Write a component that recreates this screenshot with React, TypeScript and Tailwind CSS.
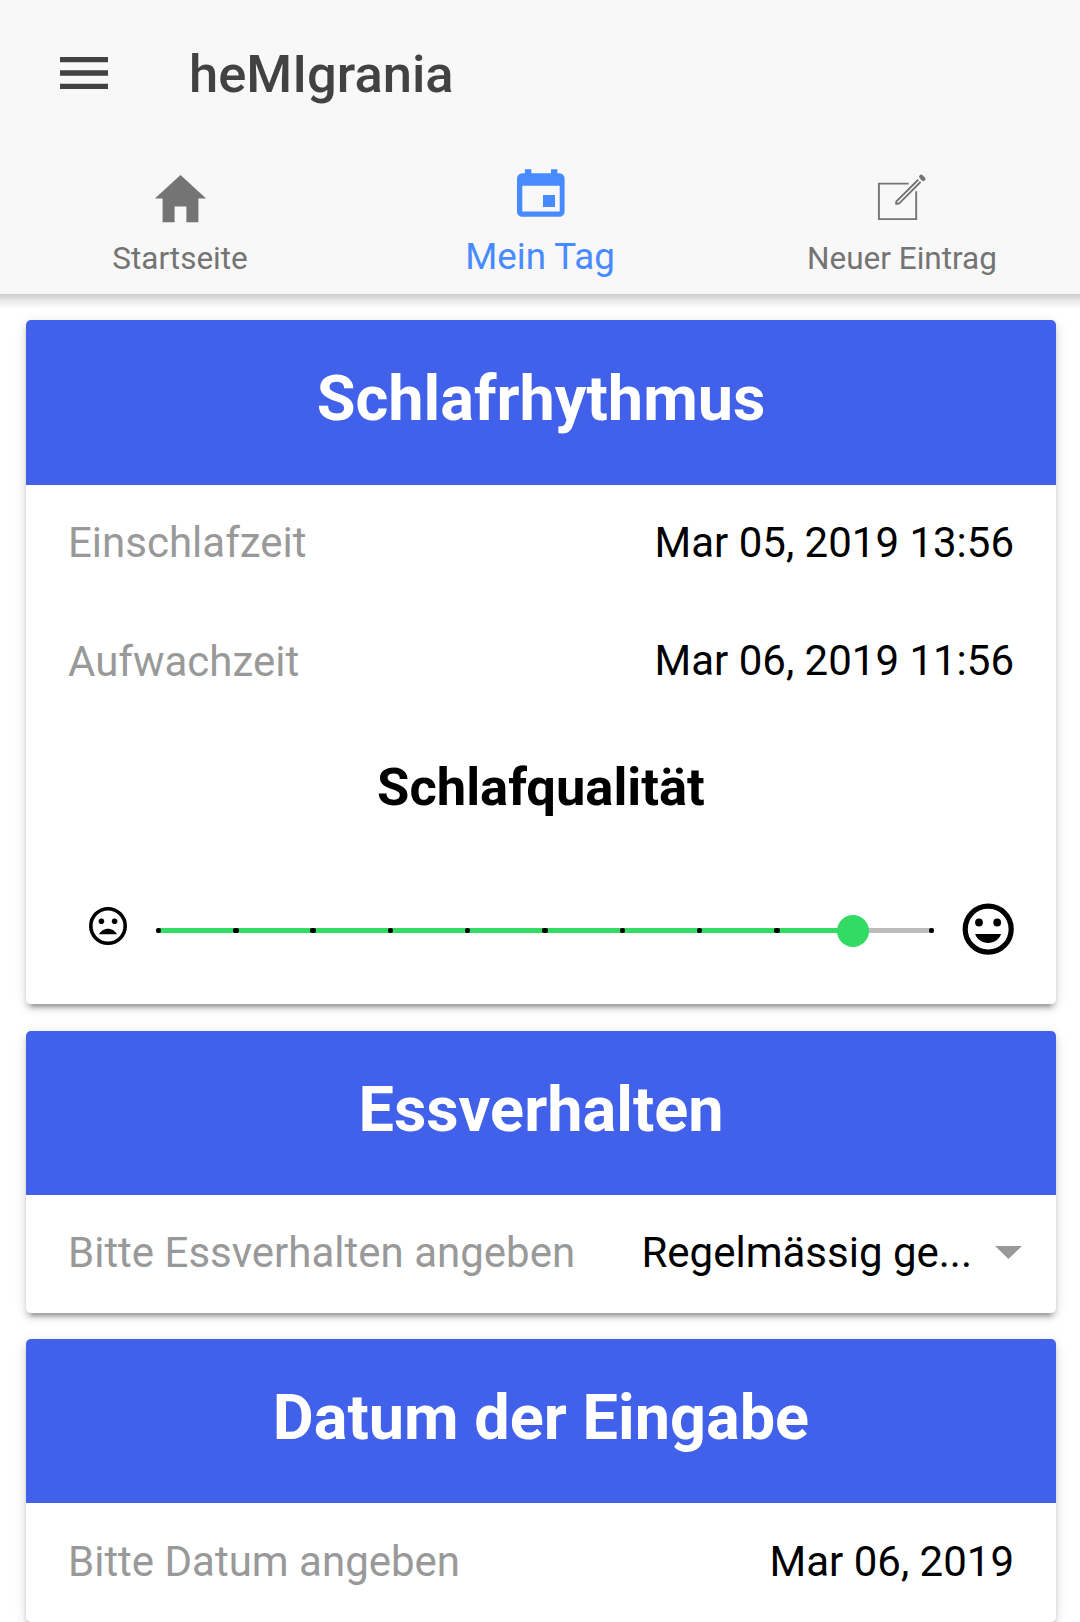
import React from "react";

const tabs = [
  { label: "Startseite", active: false },
  { label: "Mein Tag", active: true },
  { label: "Neuer Eintrag", active: false },
];

function MenuIcon() {
  return (
    <svg className="-mt-[0.5px] h-16 w-16" viewBox="0 0 512 512" fill="currentColor">
      <path d="M64 384h384v-42.666H64V384zm0-106.666h384v-42.667H64v42.667zM64 128v42.665h384V128H64z" />
    </svg>
  );
}

function HomeIcon() {
  return (
    <svg className="-mt-px ml-px h-[63px] w-[63px]" viewBox="0 0 512 512" fill="currentColor">
      <path d="M208 448V320h96v128h97.6V256H464L256 64 48 256h62.4v192z" />
    </svg>
  );
}

function CalendarIcon() {
  return (
    <svg className="h-[60px] w-[60px]" viewBox="0 0 60 60" fill="currentColor">
      <path
        fillRule="evenodd"
        d="M14.9 5.300h6.400v4H41V5.300h6.400v4h1.900a5.300 5.300 0 0 1 5.300 5.300v32.800a5.300 5.300 0 0 1-5.300 5.300h-37A5.300 5.300 0 0 1 7 47.400V14.600a5.300 5.300 0 0 1 5.300-5.300h2.600zM12.300 21.800v25.800h37.400V21.800z"
      />
      <path d="M33 31H45V43H33z" />
    </svg>
  );
}

function CreateIcon() {
  return (
    <svg className="-mt-px h-14 w-[60px]" viewBox="0 0 60 56" fill="none" stroke="currentColor" strokeWidth="1.900">
      <path d="M36.700 13.600H6.900v35.500h37.300V21.300" />
      <path d="M46.200 9.800L24.400 31.300V33.600H27L48.500 12" />
      <path d="M23.500 31.200l3.200 3.300h-3.200z" fill="currentColor" stroke="none" />
      <path d="M49.200 6.800l2.200 2.100" strokeWidth="4.200" strokeLinecap="round" />
    </svg>
  );
}

function SadIcon() {
  return (
    <svg className="h-[38px] w-[38px]" viewBox="0 0 38 38">
      <circle cx="19" cy="19" r="17.200" fill="none" stroke="currentColor" strokeWidth="3.600" />
      <circle cx="12.400" cy="14.300" r="2.800" />
      <circle cx="25.600" cy="14.300" r="2.800" />
      <path d="M9.900 27.300C11.700 24 15 21.700 19 21.700S26.300 24 28.100 27.300z" />
    </svg>
  );
}

function HappyIcon() {
  return (
    <svg className="h-[52px] w-[52px]" viewBox="0 0 52 52" fill="currentColor">
      <circle cx="26.200" cy="26.200" r="23" fill="none" stroke="currentColor" strokeWidth="5.200" />
      <circle cx="17" cy="19.500" r="3.900" />
      <circle cx="35.200" cy="19.500" r="3.900" />
      <path d="M26.100 39.900c6 0 11-3.600 13-8.900H13.100c2 5.300 7 8.900 13 8.900z" />
    </svg>
  );
}

const icons = [HomeIcon, CalendarIcon, CreateIcon];

function Card({ title, tall = false, children }: { title: string; tall?: boolean; children: React.ReactNode }) {
  return (
    <section className="overflow-hidden rounded-[5px] bg-white shadow-[0_5px_5px_0_rgba(0,0,0,0.14),0_8px_3px_-5px_rgba(0,0,0,0.2),0_3px_13px_0_rgba(0,0,0,0.12)]">
      <h2
        className={`flex items-center justify-center bg-[#4161ea] text-[63px] font-bold text-white ${
          tall ? "h-[165px] pb-[7px]" : "h-[164px] pb-[6px]"
        }`}
      >
        {title}
      </h2>
      {children}
    </section>
  );
}

type RowProps = { label: string; value: string; select?: boolean; lowLabel?: boolean; tall?: boolean };

function Row({ label, value, select = false, lowLabel = false, tall = false }: RowProps) {
  return (
    <div className={`flex items-center justify-between px-[42px] text-[42px] ${tall ? "h-[119px] pb-[3px]" : "h-[118px] pb-1"}`}>
      <span className={lowLabel ? "pt-[2px] text-[#999]" : "text-[#999]"}>{label}</span>
      <span className="flex items-center text-black">
        {value}
        {select && (
          <svg className="-mr-2 ml-[23px] h-[13px] w-[27px]" viewBox="0 0 27 13" fill="#999">
            <path d="M0 0h27L13.500 13z" />
          </svg>
        )}
      </span>
    </div>
  );
}

export default function App() {
  return (
    <div className="h-[1622px] overflow-hidden bg-white font-['Roboto',sans-serif]">
      <header className="relative h-[294px] bg-[#f8f8f8]">
        <div className="flex h-[147px] items-center pl-[52px] text-[#424242]">
          <MenuIcon />
          <h1 className="mt-[2px] ml-[73px] text-[52.5px] font-medium">heMIgrania</h1>
        </div>
        <nav className="grid h-[147px] grid-cols-3">
          {tabs.map(({ label, active }, i) => {
            const Icon = icons[i];
            return (
              <div
                key={label}
                className={`flex flex-col items-center last:pl-1 ${active ? "text-[#488aff]" : "text-[#747474]"}`}
              >
                <div className={active ? "flex h-[94px] items-center" : "flex h-[103px] items-center"}>
                  <Icon />
                </div>
                <span className={active ? "text-[36.750px] leading-[32px]" : "text-[31.500px] leading-[18px]"}>{label}</span>
              </div>
            );
          })}
        </nav>
        <div className="absolute inset-x-0 top-full h-[14px] bg-linear-to-b from-black/20 via-black/8 to-black/1" />
      </header>
      <main className="flex flex-col gap-[26px] pt-[26px] pr-6 pl-[26px]">
        <Card title="Schlafrhythmus" tall>
          <Row label="Einschlafzeit" value="Mar 05, 2019 13:56" />
          <Row label="Aufwachzeit" value="Mar 06, 2019 11:56" lowLabel />
          <h3 className="mt-[31px] text-center text-[52.500px] leading-[70px] font-bold text-black">Schlafqualität</h3>
          <div className="mt-[66px] flex h-[116px] pl-[63px]">
            <div className="mt-[18.700px]"><SadIcon /></div>
            <div className="relative mt-[40px] ml-[31px] h-[5px] w-[773px] bg-[#bdbdbd]">
              <div className="h-full w-[696px] bg-[#32db64]" />
              {Array.from({ length: 11 }, (_, i) => (
                <span key={i} className="absolute top-0 -ml-[2.300px] h-[5px] w-[5.500px] rounded-[2px] bg-black" style={{ left: `${i * 10}%` }} />
              ))}
              <span className="absolute -top-[13.500px] left-[679.300px] h-8 w-8 rounded-full bg-[#32db64]" />
            </div>
            <div className="mt-[14.500px] ml-[31px]"><HappyIcon /></div>
          </div>
        </Card>
        <div className="mt-px">
          <Card title="Essverhalten">
            <Row label="Bitte Essverhalten angeben" value="Regelmässig ge..." select />
          </Card>
        </div>
        <Card title="Datum der Eingabe">
          <Row label="Bitte Datum angeben" value="Mar 06, 2019" tall />
        </Card>
      </main>
    </div>
  );
}
